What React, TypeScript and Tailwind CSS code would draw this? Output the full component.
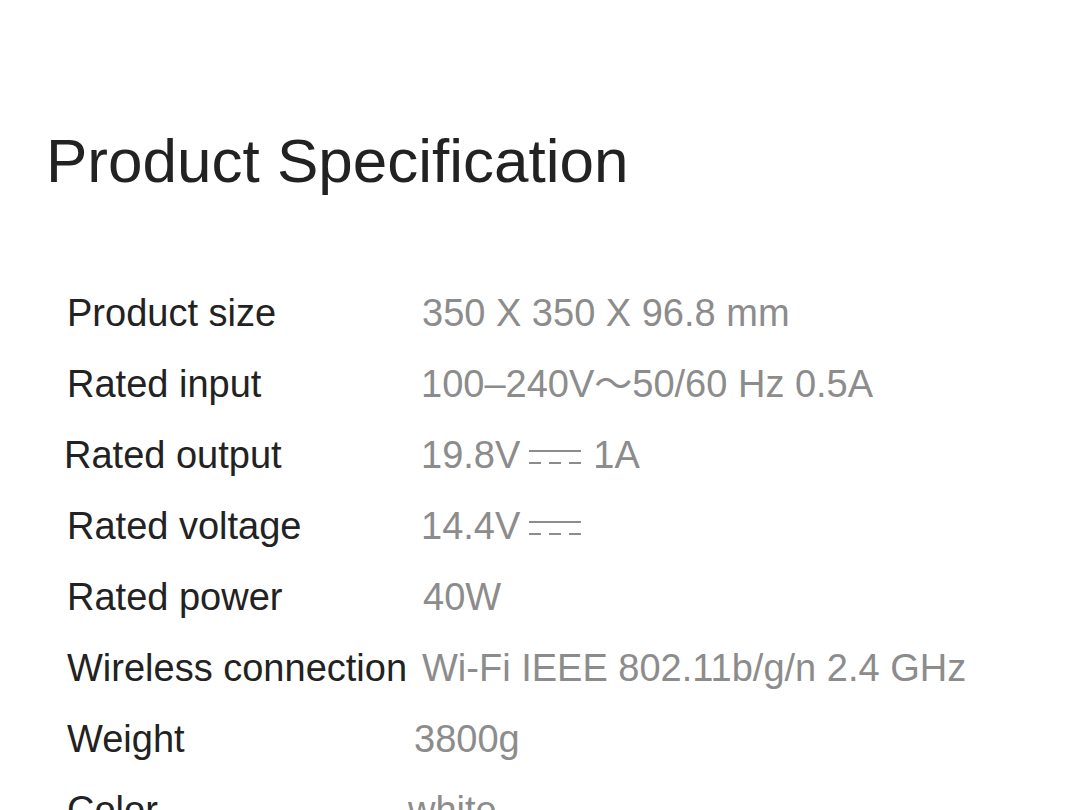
const DcSymbol = () => (
  <svg width="52" height="16" viewBox="0 0 52 16" className="inline-block align-[3px] ml-[9px] mr-[12px]" aria-hidden>
    <line x1="0" y1="2" x2="52" y2="2" stroke="#8c8c8c" strokeWidth="2" />
    <line x1="0" y1="14" x2="12" y2="14" stroke="#8c8c8c" strokeWidth="2" />
    <line x1="20" y1="14" x2="32" y2="14" stroke="#8c8c8c" strokeWidth="2" />
    <line x1="40" y1="14" x2="52" y2="14" stroke="#8c8c8c" strokeWidth="2" />
  </svg>
)

interface SpecRow {
  label: string
  value: React.ReactNode
  labelClass: string
  valueClass: string
}

// the source image has labels/values slightly off-column in a few rows
const rows: SpecRow[] = [
  { label: "Product size", value: "350 X 350 X 96.8 mm", labelClass: "ml-[21px]", valueClass: "ml-0" },
  { label: "Rated input", value: "100–240V～50/60 Hz 0.5A", labelClass: "ml-[21px]", valueClass: "-ml-px" },
  {
    label: "Rated output",
    value: (
      <>
        19.8V
        <DcSymbol />
        1A
      </>
    ),
    labelClass: "ml-[18px]",
    valueClass: "-ml-px",
  },
  {
    label: "Rated voltage",
    value: (
      <>
        14.4V
        <DcSymbol />
      </>
    ),
    labelClass: "ml-[21px]",
    valueClass: "-ml-px",
  },
  { label: "Rated power", value: "40W", labelClass: "ml-[21px]", valueClass: "ml-px" },
  { label: "Wireless connection", value: "Wi-Fi IEEE 802.11b/g/n 2.4 GHz", labelClass: "ml-[21px]", valueClass: "ml-0" },
  { label: "Weight", value: "3800g", labelClass: "ml-[21px]", valueClass: "-ml-[8px]" },
  { label: "Color", value: "white", labelClass: "ml-[21px]", valueClass: "-ml-[14px]" },
]

export default function App() {
  return (
    <div
      className="min-h-[810px] w-full bg-white pl-[46px] pt-[130px] overflow-hidden"
      style={{ fontFamily: '"Liberation Sans", Arial, "Noto Sans CJK SC", sans-serif' }}
    >
      <h1 className="text-[62px] leading-[62px] font-normal text-[#222222]">Product Specification</h1>

      <div className="mt-[86px] flex flex-col">
        {rows.map((row) => (
          <div key={row.label} className="flex h-[71px] text-[38px] leading-[71px] whitespace-nowrap">
            <div className="w-[376px] shrink-0">
              <span className={`inline-block text-[#222222] ${row.labelClass}`}>{row.label}</span>
            </div>
            <span className={`inline-block text-[#8c8c8c] ${row.valueClass}`}>{row.value}</span>
          </div>
        ))}
      </div>
    </div>
  )
}
